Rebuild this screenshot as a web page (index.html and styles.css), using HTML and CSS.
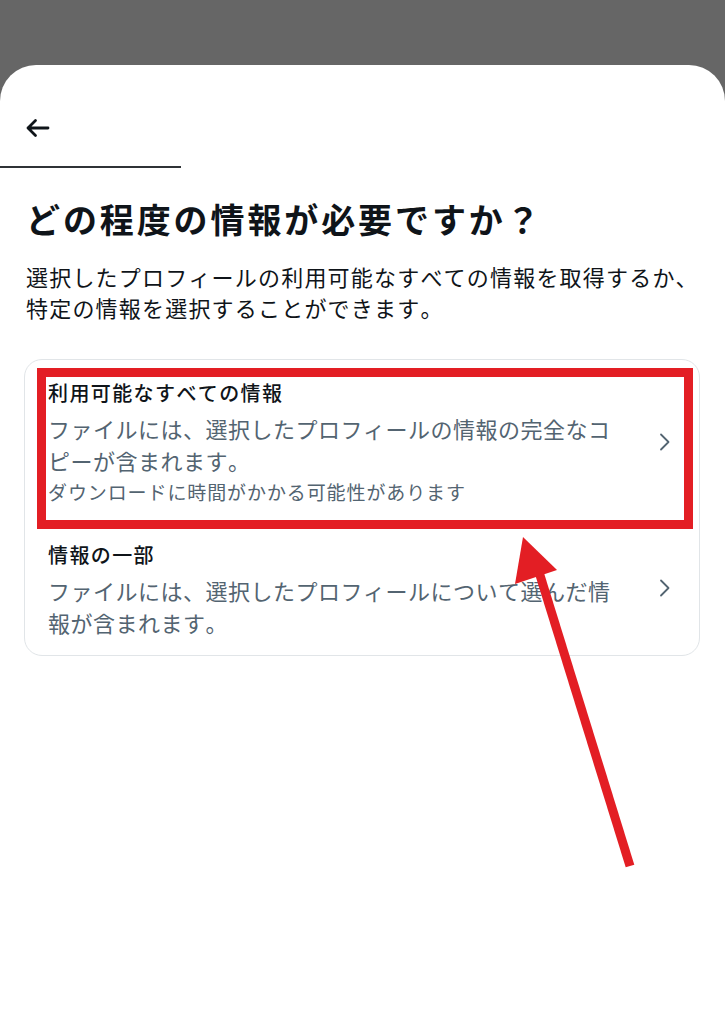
FILE: index.html
```html
<!DOCTYPE html>
<html lang="ja">
<head>
<meta charset="utf-8">
<title>どの程度の情報が必要ですか？</title>
<link rel="stylesheet" href="styles.css">
</head>
<body>
<div class="sheet">
  <div class="topbar">
    <svg class="back" viewBox="0 0 32 32" width="32" height="32" aria-hidden="true">
      <path d="M25 16H5M12.5 8.5L5 16l7.5 7.5" fill="none" stroke="#0f1419" stroke-width="2.8" stroke-linecap="round" stroke-linejoin="round"/>
    </svg>
  </div>
  <div class="tabline"></div>
  <div class="content">
    <h1 class="heading">どの程度の情報が必要ですか？</h1>
    <p class="lead">選択したプロフィールの利用可能なすべての情報を取得するか、<br>特定の情報を選択することができます。</p>
    <div class="card">
      <div class="option option-first">
        <div class="option-text">
          <div class="option-title">利用可能なすべての情報</div>
          <div class="option-desc">ファイルには、選択したプロフィールの情報の完全なコ<br>ピーが含まれます。</div>
          <div class="option-note">ダウンロードに時間がかかる可能性があります</div>
        </div>
        <svg class="chev" viewBox="0 0 12 18" width="12" height="18" aria-hidden="true">
          <path d="M2 1.5L9.5 9 2 16.5" fill="none" stroke="#536471" stroke-width="1.8" stroke-linecap="round" stroke-linejoin="round"/>
        </svg>
        <div class="highlight"></div>
      </div>
      <div class="option option-last">
        <div class="option-text">
          <div class="option-title">情報の一部</div>
          <div class="option-desc">ファイルには、選択したプロフィールについて選んだ情<br>報が含まれます。</div>
        </div>
        <svg class="chev" viewBox="0 0 12 18" width="12" height="18" aria-hidden="true">
          <path d="M2 1.5L9.5 9 2 16.5" fill="none" stroke="#536471" stroke-width="1.8" stroke-linecap="round" stroke-linejoin="round"/>
        </svg>
      </div>
    </div>
  </div>
</div>
<svg class="annot" viewBox="0 0 725 1024" width="725" height="1024" aria-hidden="true">
  <line x1="539" y1="572" x2="630" y2="866" stroke="#e31e24" stroke-width="9"/>
  <polygon points="523,537 515,584 557,570" fill="#e31e24"/>
</svg>
</body>
</html>
```

FILE: styles.css
```css
html, body {
  margin: 0;
  padding: 0;
}
body {
  background: #666666;
  font-family: "Noto Sans CJK JP", "Noto Sans", "Liberation Sans", sans-serif;
  font-kerning: none;
  font-feature-settings: "kern" 0, "palt" 0;
  color: #0f1419;
  position: relative;
  width: 725px;
  height: 1024px;
  overflow: hidden;
}
.sheet {
  margin-top: 65px;
  background: #ffffff;
  border-radius: 36px 36px 0 0;
  height: 959px;
}
.topbar {
  height: 101px;
  display: flex;
  align-items: flex-start;
}
.back {
  display: block;
  margin-top: 47px;
  margin-left: 23px;
}
.tabline {
  width: 181px;
  height: 2px;
  background: #2f3336;
}
.content {
  padding: 0 24px;
}
.heading {
  margin: 29px 0 0 2px;
  font-size: 34px;
  line-height: 44px;
  font-weight: 700;
  letter-spacing: 2.9px;
}
.lead {
  margin: 20px 0 0 2px;
  font-size: 22px;
  line-height: 31px;
  letter-spacing: 1.2px;
  color: #0f1419;
}
.card {
  margin-top: 36px;
  width: 674px;
  border: 1px solid #e1e5e8;
  border-radius: 18px;
}
.option {
  position: relative;
  display: flex;
  align-items: center;
  padding: 16px 28px 14px 23px;
}
.option-last {
  padding-bottom: 17px;
}
.option-text {
  flex: 1;
}
.option-title {
  font-size: 20px;
  line-height: 34px;
  font-weight: 500;
  letter-spacing: 1.4px;
  margin-bottom: 2px;
}
.option-desc {
  font-size: 22px;
  line-height: 32px;
  letter-spacing: 0.5px;
  color: #536471;
}
.option-note {
  font-size: 19px;
  line-height: 32px;
  letter-spacing: 0.9px;
  color: #536471;
}
.chev {
  display: block;
  flex: none;
  margin-left: 12px;
}
.highlight {
  position: absolute;
  left: 12px;
  top: 8px;
  right: 6px;
  bottom: -7px;
  border: 9px solid #e31e24;
  pointer-events: none;
}
.annot {
  position: absolute;
  left: 0;
  top: 0;
  pointer-events: none;
}
```
